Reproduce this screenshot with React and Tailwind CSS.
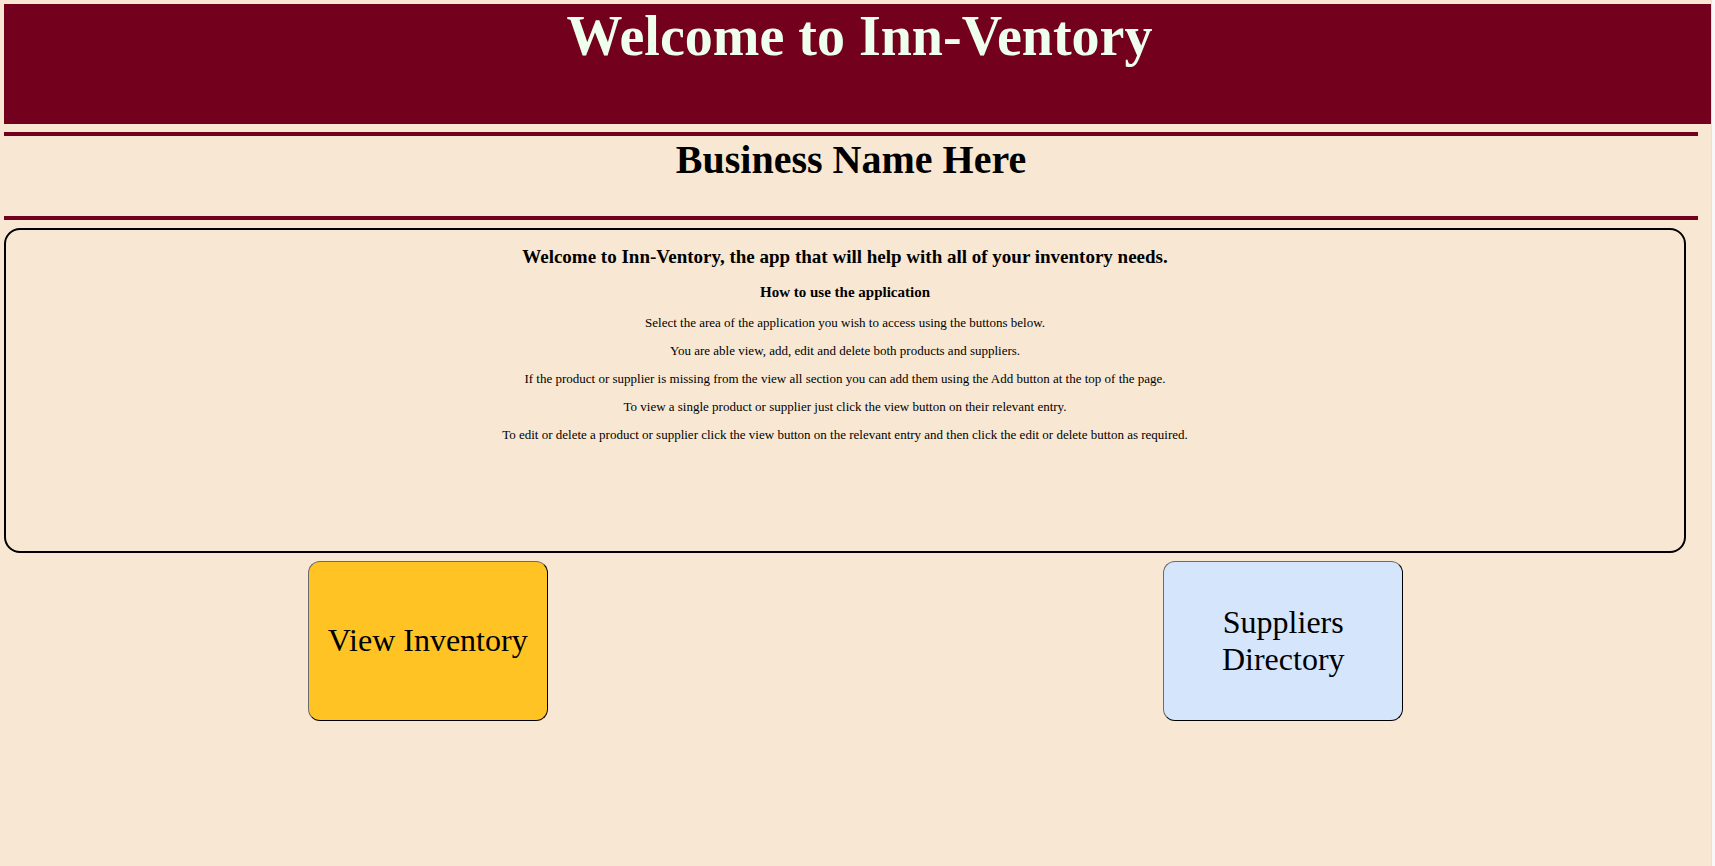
const steps = [
  "Select the area of the application you wish to access using the buttons below.",
  "You are able view, add, edit and delete both products and suppliers.",
  "If the product or supplier is missing from the view all section you can add them using the Add button at the top of the page.",
  "To view a single product or supplier just click the view button on their relevant entry.",
  "To edit or delete a product or supplier click the view button on the relevant entry and then click the edit or delete button as required.",
];

const tile =
  "h-40 w-60 cursor-pointer rounded-xl border border-t-[#6b6b6b] border-l-[#6b6b6b] border-r-black border-b-black px-2 pb-px text-[32px] leading-[37px] text-black";

export default function App() {
  return (
    <div className="flex min-h-screen bg-[#f8f8f8] font-['Liberation_Serif',serif] text-black">
      <div className="mr-[3px] flex-1 border-r border-[#e2e2e6] bg-[#f8e8d3]">
        <header className="ml-1 mt-1 h-[120px] bg-[#73001c] pl-1 text-center">
          <h1 className="text-[56px] leading-[64px] font-bold text-[#eeffee]">Welcome to Inn-Ventory</h1>
        </header>
        <main className="pt-2">
          <div className="mr-[13px] ml-1 h-[88px] border-y-4 border-[#73001c] text-center">
            <h2 className="text-[40px] leading-[48px] font-bold">Business Name Here</h2>
          </div>
          <section className="mt-2 mr-[25px] ml-1 min-h-[325px] rounded-2xl border-2 border-black pt-4 text-center">
            <h3 className="text-[19px] leading-[22px] font-bold">
              Welcome to Inn-Ventory, the app that will help with all of your inventory needs.
            </h3>
            <h4 className="mt-4 text-[15px] leading-[17px] font-bold">How to use the application</h4>
            <div className="mt-[14px] flex flex-col gap-[13px] text-[13px] leading-[15px]">
              {steps.map((step) => (
                <p key={step}>{step}</p>
              ))}
            </div>
          </section>
          <nav className="mt-2 grid grid-cols-2 justify-items-center">
            <button type="button" className={`${tile} bg-[#ffc423]`}>
              View Inventory
            </button>
            <button type="button" className={`${tile} bg-[#d5e5fc]`}>
              Suppliers
              <br />
              Directory
            </button>
          </nav>
        </main>
      </div>
    </div>
  );
}
